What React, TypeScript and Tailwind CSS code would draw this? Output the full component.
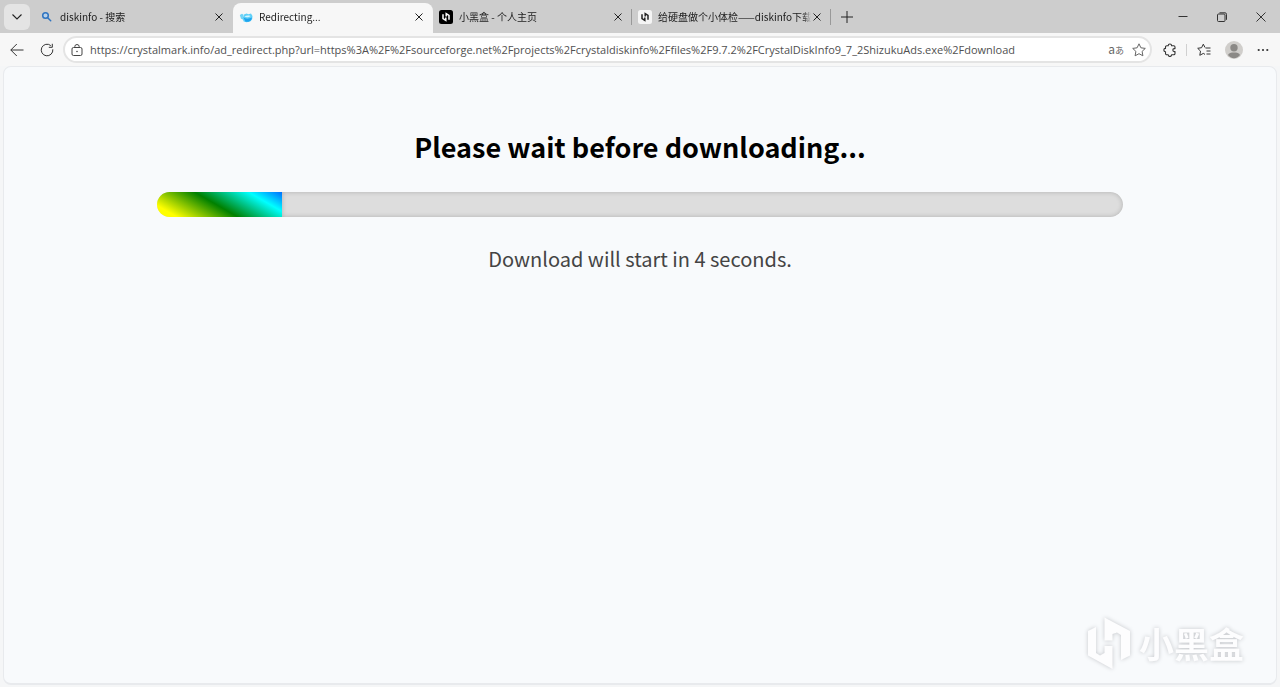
import type { ReactNode } from "react";

const PAGE_URL =
  "https://crystalmark.info/ad_redirect.php?url=https%3A%2F%2Fsourceforge.net%2Fprojects%2Fcrystaldiskinfo%2Ffiles%2F9.7.2%2FCrystalDiskInfo9_7_2ShizukuAds.exe%2Fdownload";

function CloseIcon({ className = "size-2" }: { className?: string }) {
  return (
    <svg viewBox="0 0 8 8" className={className} fill="none" stroke="currentColor" strokeWidth="1">
      <path d="M.5.5l7 7M7.5.5l-7 7" />
    </svg>
  );
}

function SearchIcon() {
  return (
    <svg viewBox="0 0 14 14" className="size-3.5 shrink-0" fill="none" stroke="#2f74c0" strokeWidth="1.5">
      <circle cx="5.5" cy="5.5" r="2.800" fill="#b9d2ea" />
      <path d="M7.700 7.700l3 3" strokeLinecap="round" />
    </svg>
  );
}

function CrystalIcon() {
  return (
    <svg viewBox="0 0 14 14" className="size-3.5 shrink-0">
      <path d="M.8 5L3 3.800l1.500.9-.7 2.300.4 2.500L2 8.800z" fill="#6fd3f6" />
      <path d="M5 4.500l2.500-1 2 .8 2.500-.8 1.500 2.500-.3 3-2 2.500-3.500.8-3-.8-1.200-3z" fill="#5fd0f8" />
      <path d="M4.500 7.500c2 1.500 5.500 1.500 8.500 0l-.8 2.800-2.700 1.500H6.500z" fill="#1fa4ee" />
      <path d="M5.500 6.500c1.500-1 4-1.200 6-.5-1.500 1.500-4.500 1.700-6 .5z" fill="#d5f5ff" />
    </svg>
  );
}

function BoxIcon({ dark = false }: { dark?: boolean }) {
  return (
    <svg viewBox="0 0 14 14" className="size-3.5 shrink-0">
      <rect width="14" height="14" rx="2.5" fill={dark ? "#000" : "#f5f5f5"} />
      <path
        d="M4 4.2v4.3l2.8 1.9V7.5M7.2 6.5V3.6L10 5.5v4.3"
        fill="none"
        stroke={dark ? "#fff" : "#222"}
        strokeWidth="1.500"
      />
    </svg>
  );
}

interface TabProps {
  icon: ReactNode;
  title: string;
  active?: boolean;
  divider?: boolean;
}

function Tab({ icon, title, active, divider }: TabProps) {
  return (
    <div
      className={
        active
          ? "relative flex h-[30px] w-[200px] min-w-0 items-center self-end rounded-t-lg bg-[#f7f7f7] pr-2 pb-[2px] pl-1.5"
          : "relative flex h-[30px] w-[199px] min-w-0 items-center self-end pr-2 pb-[2px] pl-1.5"
      }
    >
      {icon}
      <button
        type="button"
        className="ml-1.5 min-w-0 flex-1 overflow-hidden mask-r-from-95% text-left text-[10px] leading-4 whitespace-nowrap text-[#1b1b1b]"
      >
        {title}
      </button>
      <button type="button" aria-label="关闭标签页" className="flex w-3 shrink-0 justify-center text-[#222]">
        <CloseIcon />
      </button>
      {divider && <span className="absolute top-1.5 right-0 h-4 w-px bg-[#999]" />}
    </div>
  );
}

function TabStrip() {
  return (
    <header className="flex h-[33px] items-center bg-[#cdcdcd] pl-1">
      <button
        type="button"
        aria-label="标签操作菜单"
        className="mr-1 flex size-[26px] shrink-0 items-center justify-center rounded-md bg-[#e4e4e4]"
      >
        <svg viewBox="0 0 10 6" className="h-1.5 w-2.5" fill="none" stroke="#222" strokeWidth="1.1">
          <path d="M.5.5L5 5 9.500.5" />
        </svg>
      </button>
      <Tab icon={<SearchIcon />} title="diskinfo - 搜索" />
      <Tab icon={<CrystalIcon />} title="Redirecting..." active />
      <Tab icon={<BoxIcon dark />} title="小黑盒 - 个人主页" divider />
      <Tab icon={<BoxIcon />} title="给硬盘做个小体检——diskinfo下载" divider />
      <button type="button" aria-label="新建标签页" className="ml-2.5 text-[#222]">
        <svg viewBox="0 0 12 12" className="size-3" fill="none" stroke="currentColor">
          <path d="M6 0v12M0 6h12" />
        </svg>
      </button>
      <div className="ml-auto flex text-[#333]">
        <button type="button" aria-label="最小化" className="flex w-[39px] items-center justify-center">
          <svg viewBox="0 0 10 10" className="size-2.5" stroke="currentColor">
            <path d="M.5 4.500h9" />
          </svg>
        </button>
        <button type="button" aria-label="还原" className="flex w-[39px] items-center justify-center">
          <svg viewBox="0 0 10 10" className="size-2.5" fill="none" stroke="currentColor">
            <rect x=".5" y="2" width="7.500" height="7.500" rx="1" />
            <path d="M2.500.8h5.500a1.500 1.500 0 0 1 1.500 1.500v5.500" />
          </svg>
        </button>
        <button type="button" aria-label="关闭" className="flex w-[39px] items-center justify-center">
          <svg viewBox="0 0 10 10" className="size-2.5" fill="none" stroke="currentColor">
            <path d="M.5.5l9 9M9.500.5l-9 9" />
          </svg>
        </button>
      </div>
    </header>
  );
}

function AddressBar() {
  return (
    <div className="flex h-[27px] min-w-0 flex-1 items-center rounded-full border-2 border-[#e4e4e4] bg-white pr-1 pl-1.5">
      <svg viewBox="0 0 12 12" className="size-3 shrink-0" fill="none" stroke="#444" strokeWidth="1">
        <rect x="1" y="3.500" width="10" height="8" rx="1.500" />
        <path d="M3.800 3.500V2.700a2.200 2.200 0 0 1 4.400 0v.8" />
        <circle cx="6" cy="7.500" r=".8" fill="#444" stroke="none" />
      </svg>
      <input
        type="text"
        aria-label="地址和搜索栏"
        defaultValue={PAGE_URL}
        className="ml-[7px] min-w-0 flex-1 bg-transparent font-['Open_Sans','Noto_Sans_CJK_SC',sans-serif] text-[11px] leading-4 text-[#505050] outline-none"
      />
      <button type="button" aria-label="翻译" className="mr-2 flex items-baseline leading-4 text-[#666]">
        <span className="text-[12px]">a</span>
        <span className="text-[9px]">あ</span>
      </button>
      <button type="button" aria-label="收藏" className="text-[#666]">
        <svg viewBox="0 0 14 14" className="size-3.5" fill="none" stroke="currentColor" strokeLinejoin="round">
          <path d="M7 .8l1.900 4 4.400.6-3.200 3 .8 4.400L7 10.700l-3.900 2.100.8-4.400-3.200-3 4.400-.6z" />
        </svg>
      </button>
    </div>
  );
}

function Toolbar() {
  return (
    <div className="flex h-[33px] items-center bg-[#f7f7f7] pr-[11px] pl-2.5 text-[#333]">
      <button type="button" aria-label="返回">
        <svg viewBox="0 0 14 14" className="size-3.5" fill="none" stroke="currentColor">
          <path d="M13.500 7H.8M6.800 1L.8 7l6 6" />
        </svg>
      </button>
      <button type="button" aria-label="刷新" className="mr-[9px] ml-4">
        <svg viewBox="0 0 14 14" className="size-3.5" fill="none" stroke="currentColor">
          <path d="M12.800 6.300A5.800 5.800 0 1 1 10.800 2.600M12.300.8v3.500H8.800" />
        </svg>
      </button>
      <AddressBar />
      <button type="button" aria-label="扩展" className="ml-[11px]">
        <svg viewBox="0 0 14 14" className="size-3.5" fill="none" stroke="currentColor" strokeWidth="1.100" strokeLinejoin="round">
          <path d="M2.500 4a1.300 1.300 0 0 1 1.300-1.300h1.400a1.700 1.700 0 0 1 3.400 0H10.700A1.300 1.300 0 0 1 12 4v1.600h-.7a1.500 1.500 0 0 0 0 3H12v1.900a1.300 1.300 0 0 1-1.300 1.300H8.600a1.700 1.700 0 0 1-3.400 0H3.800a1.300 1.300 0 0 1-1.300-1.300V8.800a1.700 1.700 0 0 1 0-3.400z" />
        </svg>
      </button>
      <span className="mr-2.5 ml-[9px] h-3 w-px bg-[#d0d0d0]" />
      <button type="button" aria-label="收藏夹">
        <svg viewBox="0 0 14 14" className="size-3.5" fill="none" stroke="currentColor" strokeLinejoin="round">
          <path d="M8.500 5h5M9.500 8h4M9.500 11h4" />
          <path d="M8 4.500L6.300 1.200 4.600 4.700.7 5.300l2.800 2.800-.7 4.200 3.500-1.900 1.700 1" />
        </svg>
      </button>
      <button type="button" aria-label="个人资料" className="mr-3.5 ml-3.5">
        <svg viewBox="0 0 18 18" className="size-[18px]">
          <circle cx="9" cy="9" r="9" fill="#d0cecb" />
          <circle cx="9" cy="6.800" r="3.700" fill="#8b8986" />
          <path d="M3 14c.8-2 3-2.500 6-2.500s5.200.5 6 2.500c-1.400 2-3.500 3.200-6 3.200S4.400 16 3 14z" fill="#8b8986" />
        </svg>
      </button>
      <button type="button" aria-label="设置及其他">
        <svg viewBox="0 0 12 12" className="size-3" fill="currentColor">
          <circle cx="1.700" cy="6" r="1.100" />
          <circle cx="6" cy="6" r="1.100" />
          <circle cx="10.300" cy="6" r="1.100" />
        </svg>
      </button>
    </div>
  );
}

function Watermark() {
  return (
    <div className="absolute right-8 bottom-3.5 flex items-center gap-2 text-[#fdfdfe] drop-shadow-[0_0_2px_#c4c6ca]">
      <svg viewBox="0 0 44 52" className="h-[52px] w-11" fill="currentColor">
        <path d="M1 14l8-4v26l4 2.500 4.500-2.500v-7h8v23L1 38.500z" />
        <path d="M17.500.5L43 14v24.500L34 43V18l-4-2.500-4.500 1.500v6.500h-8z" />
      </svg>
      <span className="text-[35px] leading-10 font-bold">小黑盒</span>
    </div>
  );
}

export default function App() {
  return (
    <div className="flex min-h-screen flex-col bg-[#f5f6f7] font-['Noto_Sans_CJK_SC',sans-serif]">
      <TabStrip />
      <Toolbar />
      <main className="relative mx-[3px] mb-0.5 flex-1 rounded-lg border border-b-2 border-[#e8eaed] bg-[#f8fafc] pt-[60px] text-center">
        <h1 className="text-[27px] leading-10 font-bold text-black">Please wait before downloading...</h1>
        <div className="mx-auto mt-[25px] flex h-[25px] w-[76%] overflow-hidden rounded-full bg-[#ddd]">
          <div
            role="progressbar"
            aria-label="Download countdown"
            aria-valuenow={13}
            className="w-[13%] bg-[linear-gradient(30deg,#ff0_12%,#008000_48%,#0ff_80%,#00f_115%)]"
          />
          <div className="flex-1 rounded-r-full shadow-[inset_0_0_5px_#00000033]" />
        </div>
        <p className="mt-6 text-[20px] leading-9 text-[#444]">Download will start in 4 seconds.</p>
        <Watermark />
      </main>
    </div>
  );
}
